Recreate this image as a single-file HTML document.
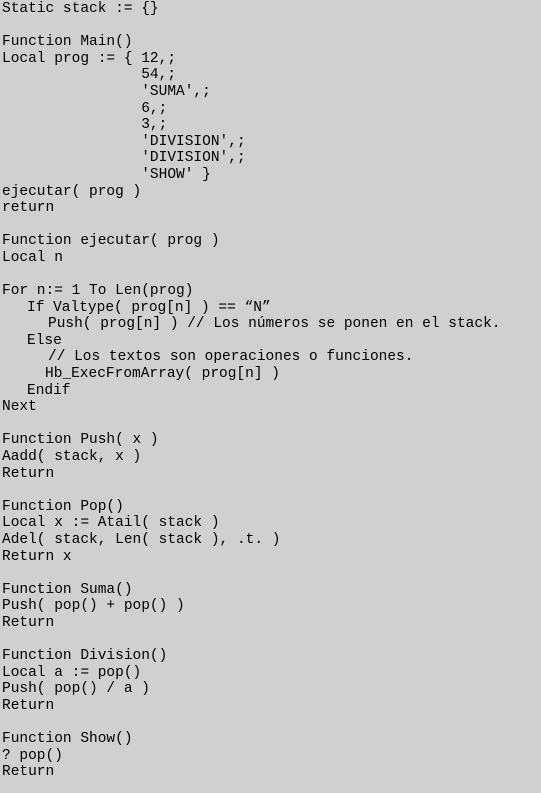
<!DOCTYPE html>
<html><head><meta charset="utf-8"><style>
html,body{margin:0;padding:0;background:#d0d0d0;width:541px;height:793px;overflow:hidden}
.c{position:absolute;left:2px;top:1px;font-family:"Liberation Mono","Courier New",monospace;font-size:14.5px;line-height:16.6px;color:#000}
.c div{height:16.6px;white-space:pre}
</style></head><body><div class="c">
<div>Static stack := {}</div>
<div> </div>
<div>Function Main()</div>
<div>Local prog := { 12,;</div>
<div>                54,;</div>
<div>                'SUMA',;</div>
<div>                6,;</div>
<div>                3,;</div>
<div>                'DIVISION',;</div>
<div>                'DIVISION',;</div>
<div>                'SHOW' }</div>
<div>ejecutar( prog )</div>
<div>return</div>
<div> </div>
<div>Function ejecutar( prog )</div>
<div>Local n</div>
<div> </div>
<div>For n:= 1 To Len(prog)</div>
<div style="padding-left:25px">If Valtype( prog[n] ) == “N”</div>
<div style="padding-left:46px">Push( prog[n] ) // Los números se ponen en el stack.</div>
<div style="padding-left:25px">Else</div>
<div style="padding-left:46px">// Los textos son operaciones o funciones.</div>
<div style="padding-left:43px">Hb_ExecFromArray( prog[n] )</div>
<div style="padding-left:25px">Endif</div>
<div>Next</div>
<div> </div>
<div>Function Push( x )</div>
<div>Aadd( stack, x )</div>
<div>Return</div>
<div> </div>
<div>Function Pop()</div>
<div>Local x := Atail( stack )</div>
<div>Adel( stack, Len( stack ), .t. )</div>
<div>Return x</div>
<div> </div>
<div>Function Suma()</div>
<div>Push( pop() + pop() )</div>
<div>Return</div>
<div> </div>
<div>Function Division()</div>
<div>Local a := pop()</div>
<div>Push( pop() / a )</div>
<div>Return</div>
<div> </div>
<div>Function Show()</div>
<div>? pop()</div>
<div>Return</div>
</div></body></html>
